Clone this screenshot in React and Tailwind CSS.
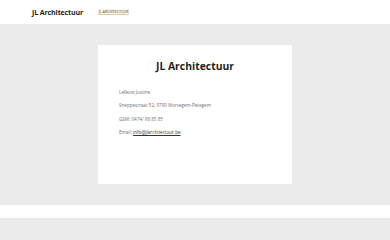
import React from "react";

const App = () => {
  return (
    <div className="w-[390px] h-[240px] bg-[#ebebeb] overflow-hidden font-['Open_Sans',sans-serif]">
      {/* Top bar */}
      <header className="h-[24px] bg-white flex items-center pl-[32px]">
        <span className="text-[7px] font-bold text-[#222] leading-none tracking-[-0.1px]">
          JL Architectuur
        </span>
        <span className="ml-[15px] text-[3.6px] uppercase text-[#555] leading-none bg-[#fbefe0] px-[0.5px] py-[1px] border-b-[0.5px] border-[#e9c9a0]">
          JL Architectuur
        </span>
      </header>

      {/* Contact card */}
      <div className="pt-[21px] pl-[98px]">
        <div className="w-[194px] h-[139px] bg-white pt-[14px] px-[21px]">
          <h1 className="text-center text-[10.4px] leading-[15px] font-bold text-[#1f1f1f]">
            JL Architectuur
          </h1>
          <div className="mt-[15.5px] flex flex-col gap-[8.6px] text-[4.6px] leading-[5px] text-[#6f6f6f]">
            <p>Lefeuw Justine</p>
            <p>Sneppestraat 52, 9790 Wortegem-Petegem</p>
            <p>GSM: 0474/ 98 85 85</p>
            <p>
              Email:{" "}
              <a href="#" className="text-[#333] underline">
                info@jlarchitectuur.be
              </a>
            </p>
          </div>
        </div>
      </div>

      {/* Footer strip */}
      <div className="mt-[21px] h-[13px] bg-white" />
    </div>
  );
};

export default App;
